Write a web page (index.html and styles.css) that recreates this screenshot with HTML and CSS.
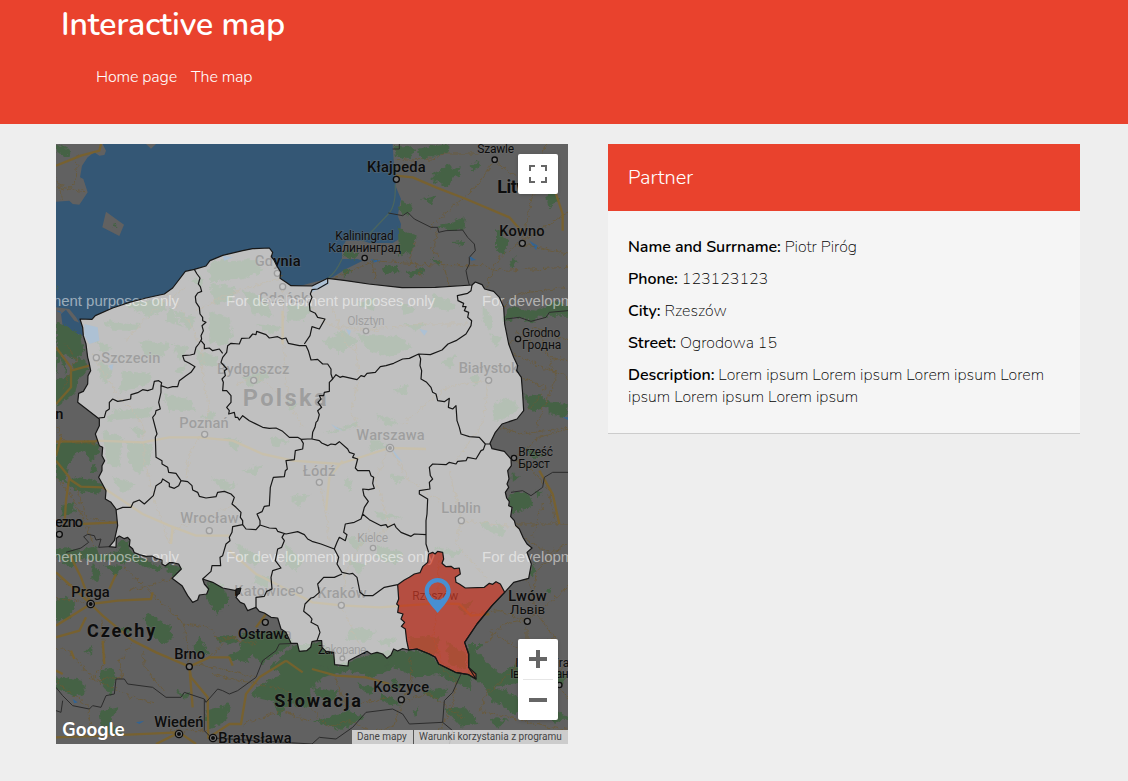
FILE: index.html
```html
<!DOCTYPE html>
<html lang="en">
<head>
<meta charset="utf-8">
<title>Interactive map</title>
<link rel="stylesheet" href="styles.css">
</head>
<body>
<header class="header">
  <h1 class="title">Interactive map</h1>
  <nav class="nav"><a class="link home">Home page</a><a class="link themap">The map</a></nav>
</header>
<main class="main">
  <section class="map">
    <svg class="canvas" viewBox="0 0 1536 1800" xmlns="http://www.w3.org/2000/svg">
      <defs>
        <path id="poland" d="M72 525L108 526 118 515 170 492 220 475 270 462 325 450 350 432 388 382 415 376 450 366 462 350 500 334 560 320 590 314 640 312 650 325 646 338 655 350 664 368 674 384 672 403 690 415 705 425 768 426 815 403 870 410 938 420 1038 431 1138 430 1248 423 1258 414 1278 422 1286 435 1313 442 1330 460 1343 490 1346 540 1358 600 1373 640 1385 665 1382 680 1396 700 1400 750 1403 800 1383 825 1338 840 1318 865 1302 898 1308 914 1345 922 1365 945 1366 965 1355 980 1359 1005 1353 1020 1358 1030 1348 1045 1352 1062 1360 1073 1358 1085 1368 1090 1364 1118 1375 1130 1379 1145 1390 1155 1401 1180 1413 1200 1428 1212 1413 1225 1426 1260 1418 1303 1373 1315 1346 1345 1308 1385 1263 1440 1226 1495 1238 1530 1238 1570 1260 1605 1238 1592 1198 1585 1148 1560 1138 1540 1120 1530 1083 1515 1058 1518 1040 1514 1025 1521 1013 1515 1005 1533 993 1543 980 1530 963 1525 945 1530 933 1522 898 1540 878 1550 876 1566 836 1562 833 1525 810 1522 798 1510 797 1490 783 1490 768 1493 764 1510 752 1520 730 1522 724 1498 705 1498 690 1465 675 1455 665 1422 645 1420 625 1407 610 1402 600 1390 575 1400 565 1380 553 1375 540 1360 552 1340 540 1340 500 1332 470 1315 440 1305 445 1320 458 1335 452 1350 430 1353 425 1368 410 1375 395 1355 378 1325 348 1303 376 1275 368 1260 350 1256 340 1256 328 1266 318 1260 318 1248 300 1243 288 1236 270 1237 250 1232 235 1226 230 1214 220 1206 222 1188 215 1180 205 1184 190 1176 181 1183 180 1210 160 1208 175 1190 185 1145 180 1095 165 1075 148 1065 150 1040 138 1018 128 1000 138 980 138 965 146 950 138 935 140 910 130 905 118 870 130 845 130 825 65 775 68 748 82 742 95 720 96 695 104 680 99 655 95 640 90 600 82 575 80 550Z"/>
        <path id="region" d="M1118 1230L1130 1225 1137 1230 1145 1222 1160 1225 1163 1245 1158 1258 1170 1268 1185 1267 1195 1274 1210 1272 1213 1290 1198 1300 1200 1315 1210 1320 1228 1332 1285 1330 1300 1318 1310 1321 1320 1313 1333 1320 1346 1345 1308 1385 1263 1440 1226 1495 1238 1530 1238 1570 1260 1590 1260 1605 1238 1592 1198 1585 1148 1560 1138 1540 1120 1530 1083 1515 1058 1518 1052 1490 1048 1455 1036 1447 1046 1435 1035 1425 1041 1410 1025 1405 1028 1385 1022 1380 1028 1365 1025 1322 1045 1308 1060 1300 1075 1290 1092 1286 1100 1268 1115 1255Z"/>
        <filter id="rough" x="0" y="0" width="100%" height="100%"><feTurbulence type="fractalNoise" baseFrequency=".07" numOctaves="3" seed="4" result="n"/><feDisplacementMap in="SourceGraphic" in2="n" scale="22" xChannelSelector="R" yChannelSelector="G"/></filter>
        <clipPath id="others"><path clip-rule="evenodd" d="M0 0H1536V1800H0ZM1118 1230L1130 1225 1137 1230 1145 1222 1160 1225 1163 1245 1158 1258 1170 1268 1185 1267 1195 1274 1210 1272 1213 1290 1198 1300 1200 1315 1210 1320 1228 1332 1285 1330 1300 1318 1310 1321 1320 1313 1333 1320 1346 1345 1308 1385 1263 1440 1226 1495 1238 1530 1238 1570 1260 1590 1260 1605 1238 1592 1198 1585 1148 1560 1138 1540 1120 1530 1083 1515 1058 1518 1052 1490 1048 1455 1036 1447 1046 1435 1035 1425 1041 1410 1025 1405 1028 1385 1022 1380 1028 1365 1025 1322 1045 1308 1060 1300 1075 1290 1092 1286 1100 1268 1115 1255Z"/></clipPath>
      </defs>
      <rect width="1536" height="1800" fill="#616161"/>
      <path class="sea" d="M0 173L40 170 50 180 70 182 95 145 82 105 72 100 78 65 95 40 115 25 130 35 145 33 150 20 140 0H1010L1013 50 1020 130 1035 165 1025 215 1035 240 1030 285 1010 297 940 297 920 290 870 290 858 310 858 345 905 345 920 350 870 375 830 400 640 450 72 540 60 520 40 495 0 490ZM15 510L30 497 55 530 80 540V575L35 560 20 545Z"/>
      <path class="land" d="M150 203L204 242 190 276 139 250ZM270 0H300L285 14Z"/>
      <use href="#poland" class="land"/>
      <path class="spit" d="M1018 120Q1020 190 995 212Q930 280 920 292M858 345Q840 385 817 402"/>
      <!-- forests -->
      <g class="forest" filter="url(#rough)">
        <path d="M0 0L45 20 40 38 0 25ZM168 248L178 240 185 253ZM0 420L8 440 0 435ZM0 530L50 555 75 575 85 620 55 645 0 620ZM0 600L30 660 30 690 12 640 0 690ZM65 640L90 650 100 680 70 700 62 740 20 775 0 790V710L40 690ZM0 900L60 890 120 895 132 925 105 955 90 920 60 925 35 970 30 1010 60 1000 110 1005 140 1025 130 1050 60 1040 0 1000ZM110 960L125 980 105 990ZM20 1080L50 1075 60 1100 15 1115ZM0 1215L30 1210 70 1220 120 1205 130 1235 200 1220 225 1240 205 1262 170 1245 110 1250 80 1240 45 1270 0 1240ZM185 1190L215 1190 225 1220 260 1245 320 1270 300 1280 230 1250 190 1230ZM110 1260L135 1280 125 1318 105 1300ZM0 1365L30 1355 55 1380 40 1425 0 1430ZM140 1260L200 1270 180 1295ZM323 1268L355 1258 378 1275 350 1303 340 1285ZM458 1310L500 1325 520 1370 480 1415 470 1385 450 1360ZM260 1420L280 1410 325 1440 345 1445 350 1485 320 1500 290 1475ZM190 1455L225 1445 220 1470ZM85 1520L110 1505 108 1530ZM0 1600L80 1610 90 1640 60 1660 20 1640 0 1635ZM135 1580L165 1570 180 1600 165 1655 130 1615ZM410 1520L430 1480 460 1530 430 1530ZM480 1480L530 1475 550 1490 520 1500 490 1495ZM560 1470L690 1460 710 1500 615 1560 590 1535 570 1555 510 1540 550 1520ZM600 1630L680 1590 730 1600 760 1620 768 1690 700 1680 670 1720 650 1670 590 1655ZM450 1700L520 1680 510 1730 455 1755ZM130 1700L190 1690 160 1730 200 1775 140 1770ZM360 1640L400 1650 385 1670ZM640 1570L720 1500 768 1500 840 1565 960 1525 1060 1520 1120 1530 1150 1560 1240 1595 1250 1640 1210 1620 1140 1590 1080 1600 1020 1570 950 1600 880 1580 800 1600 760 1640Z"/>
        <path d="M1012 10L1060 5 1080 20 1050 45 1020 35ZM1080 15L1180 0 1180 25 1100 45ZM1130 90L1180 60 1200 90 1175 130 1130 110ZM1185 80L1215 70 1205 100ZM1240 65L1270 50 1265 80ZM1033 165L1070 190 1055 220 1030 200ZM1100 165L1140 155 1130 180ZM1025 250L1080 275 1065 325 1030 335ZM1140 245L1230 220 1225 255 1190 260ZM1190 295L1225 290 1215 305ZM980 370L1020 365 1030 385 985 390ZM1050 385L1100 370 1105 385 1065 400ZM1125 345L1155 345 1150 370ZM1320 255L1360 290 1345 335 1320 310ZM1360 355L1375 340 1385 355 1365 375ZM1355 490L1440 500 1500 470 1536 490 1536 515 1450 515 1430 535 1385 520 1340 535ZM1490 130L1510 170 1480 190 1470 160ZM870 320L910 330 895 345 865 335ZM860 375L890 380 860 400ZM1400 755L1450 750 1490 790 1425 800ZM1475 775L1536 780 1530 820 1475 810ZM1358 1045L1420 1050 1430 1085 1370 1110ZM1370 985L1395 1000 1370 1010ZM1405 910L1460 930 1435 945ZM1440 1040L1460 1045 1445 1065ZM1320 1130L1345 1150 1335 1180ZM1070 1700L1090 1690 1080 1720ZM1230 1500L1280 1500 1260 1520 1330 1590 1385 1555 1390 1620 1300 1630 1240 1600ZM1280 1620L1350 1640 1410 1680 1380 1710 1310 1670ZM1160 1690L1230 1690 1270 1740 1210 1745ZM1100 1645L1180 1630 1150 1670ZM1010 1605L1040 1625 1010 1640ZM768 1630L850 1640 820 1680 790 1665ZM770 1730L880 1700 930 1720 850 1760ZM790 1490L833 1525 836 1562 880 1565 890 1550 1010 1530 980 1590 860 1580 768 1560V1500ZM1470 1340L1490 1330 1480 1355ZM1420 1290L1440 1250 1430 1300ZM1450 1680L1536 1720 1500 1740ZM980 1650L1020 1670 1030 1690 975 1670ZM900 1620L960 1630 940 1655ZM1400 1500L1440 1540 1420 1570ZM1480 1560L1536 1600 1500 1640ZM1300 1720L1360 1730 1320 1750Z"/>
        <path d="M470 350L600 345 620 380 560 405 470 415 455 380ZM460 420L540 430 530 470 480 480ZM560 440L630 460 650 520 590 510ZM460 500L520 520 530 570 510 610 460 590ZM200 480L320 465 330 500 280 520ZM340 490L380 550 330 530ZM140 530L250 540 240 560 170 560ZM250 590L340 600 320 640 270 640ZM350 600L400 610 370 650ZM130 650L170 680 150 720 130 700ZM200 680L290 690 280 720 190 745ZM320 750L400 765 420 800 340 800ZM170 800L290 790 280 820 150 830ZM140 860L200 880 190 970 150 960ZM210 890L290 900 280 960 250 990 220 960ZM170 1000L240 1020 200 1050ZM420 620L490 640 480 670 430 660ZM700 480L768 490 740 530 690 530ZM560 700L630 680 640 700 580 730ZM500 880L560 890 540 920ZM460 1000L540 1020 510 1040ZM540 1200L620 1240 600 1270 550 1240ZM600 1290L640 1300 630 1330 590 1320ZM690 1200L740 1250 720 1280 690 1260ZM800 590L860 560 910 590 850 630ZM900 570L1030 580 1070 610 1000 640 940 620ZM900 480L960 460 950 500ZM1030 470L1080 500 1040 510ZM1130 450L1200 480 1180 500 1130 490ZM1280 480L1310 530 1300 560 1280 530ZM1300 570L1340 580 1320 610ZM1150 660L1200 630 1190 670ZM1310 780L1360 760 1390 790 1360 820 1310 830ZM960 810L1030 835 990 850ZM950 880L1000 910 940 920ZM800 870L910 830 900 850ZM860 1000L890 1010 880 1050ZM950 1100L1040 1120 980 1130ZM870 1180L930 1190 900 1220ZM960 1200L1040 1230 1020 1260 960 1240ZM870 1250L930 1260 910 1290ZM1270 1130L1350 1160 1340 1180 1290 1160ZM1130 1210L1220 1220 1190 1240ZM1200 1390L1250 1370 1230 1410ZM1060 1480L1150 1480 1140 1540 1060 1510ZM1170 1490L1230 1530 1230 1580 1180 1560ZM880 1450L960 1460 940 1490 870 1490ZM960 1490L1020 1480 1000 1510ZM400 410L440 400 440 430ZM120 590L170 610 140 630ZM350 680L390 660 380 690ZM220 850L270 860 250 880ZM350 500L420 520 400 560ZM600 540L680 550 640 570ZM1040 540L1110 540 1080 560ZM690 770L730 780 700 800ZM430 820L480 800 470 830ZM640 880L700 890 660 910ZM560 980L620 960 600 1000ZM700 1060L760 1050 730 1090ZM1010 740L1060 720 1050 750ZM1240 700L1270 690 1260 730ZM1000 990L1050 1000 1020 1020Z"/>
      </g>
      <g class="lake"><path d="M85 540L125 550 130 590 100 600 85 575ZM500 335L530 340 505 350ZM1090 555L1115 560 1105 575ZM870 555L885 560 880 575ZM1420 290L1445 305 1440 318ZM1240 335L1260 348 1245 350ZM815 405L820 420 768 445V428ZM825 840L860 860 840 855ZM1005 910L1040 955 1020 940ZM1520 820H1536V828ZM50 1665L65 1675 55 1678ZM240 1735L265 1730 250 1740ZM0 500L20 510 10 500ZM158 665L172 660 168 680ZM945 345L975 350 950 356Z"/></g>
      <!-- roads -->
      <g class="minor" filter="url(#rough)">
        <path d="M60 30L65 100 35 140M0 125Q80 145 90 143M20 165L0 100M0 1000Q80 1090 110 1200M30 600L60 650 20 740M0 840L20 890 120 900M60 1030L90 1120 180 1140M0 1360L60 1370 104 1380M138 1430L145 1560 110 1605 50 1530 0 1510M200 1265L290 1350 385 1440 460 1450 490 1490 560 1475M260 1520L265 1570 330 1650M385 1440L400 1570M110 1605L220 1655 300 1680M0 1300L60 1330M350 1303L220 1340M225 1500L190 1555 200 1600 110 1605M465 1590L600 1620 700 1640M560 1740L680 1700 768 1735M460 1760L340 1760M100 1775V1690L0 1610M410 1560L520 1580 600 1600M600 1500L520 1480 460 1540"/>
        <path d="M1010 50L1130 45 1160 30 1270 30M1316 47L1270 120 1160 215 1120 250M1316 47L1360 85 1400 100M1470 0L1450 60 1420 200 1400 290 1330 340 1310 380 1290 430M1400 300L1536 330M1400 290L1536 205M948 350L1160 365 1280 365 1320 380 1536 370M950 350L960 410M1150 250L1130 310 1165 370 1180 425M815 410L945 355M1330 500L1380 450 1536 430M1360 600L1440 550 1536 590M1370 630L1440 660 1536 700M1400 700L1470 730 1420 800M1330 850L1400 870 1536 850M1370 945L1450 880 1536 855M1370 945L1430 980 1480 1040 1500 1140M1380 1140H1536M1430 1180L1460 1080M1410 1300L1450 1420 1510 1500M1413 1430L1330 1400 1230 1410M1413 1430L1340 1440 1290 1500M1413 1430V1500L1370 1580 1290 1650 1270 1700 1536 1760M1413 1430L1536 1330M1060 1540L1070 1600 1045 1660 1010 1750 960 1760M1038 1670L1120 1650 1220 1720M1150 1560L1200 1610 1190 1680 1140 1780M840 1600L870 1690 1000 1660M768 1700L820 1750 880 1730 960 1770M1500 1230L1440 1280 1430 1380M1536 1560L1480 1600 1536 1660M1290 440L1310 470M1380 560L1480 640 1536 650M1450 560L1500 700 1440 850M1400 1180L1480 1230 1536 1200M1300 1460L1380 1510 1500 1480M1100 400L1060 340 1080 290"/>
        <path d="M330 450L400 530 430 600M420 500L520 450 680 400M210 590L280 510 390 430M680 430V600L700 780 740 850M110 630Q150 700 190 760L230 800 260 840 265 950 300 1080 340 1200 350 1160 540 1080M440 600V700L460 790 445 860 400 930 390 1000M540 720L610 700 690 770M900 600L910 700 885 800 910 860M1000 910L1060 1010 1150 1070M1002 910L960 1000 1000 1150 950 1180M1298 708L1280 840 1200 950M1298 708L1170 730 1040 840M1216 1130L1200 1200 1290 1300M1216 1130L1180 980M1216 1130L1390 1150M930 560L1100 540 1230 540M930 560L810 540 768 490M820 470L870 600 900 620M790 1010L810 1100 820 1200M856 1384L870 1280 940 1150M856 1384L900 1480 930 1540M1144 1380L1130 1480 1160 1560M1144 1380L1150 1240"/>
      </g>
      <g class="major"><path d="M135 0L130 20 75 35 0 65M1020 95L1070 100 1140 130 1230 165 1360 220 1395 260M1500 150L1520 210V260M0 610L45 670 45 730 0 780M45 680L100 665M0 935L15 880M0 893L120 892M0 950L40 1000 30 1070 25 1150M40 1005L75 1028 140 1030M75 1140L185 1135M0 1285L50 1330 104 1380M40 1230L75 1300 104 1380M104 1380L0 1445M104 1380L185 1370 285 1365 290 1345M104 1380L140 1415 230 1490 300 1525 400 1568 460 1540 520 1540 530 1565M400 1568L405 1600 455 1660 457 1782 520 1740 555 1740 570 1650 610 1600 690 1550M400 1568L410 1690M160 1335L180 1290M0 1480L70 1460 90 1420M45 1520L55 1545M140 1490L145 1560M0 1780L150 1775 370 1765 300 1800M370 1765L420 1800M630 1410L600 1450M690 1550L740 1585M768 1575L840 1595 930 1600 1000 1620M0 1580L20 1590M1450 980L1490 1050 1510 1140"/><path d="M120 890L260 895 340 880 430 880 530 890 620 930 710 950 850 960 1000 912 1110 915M140 1030L260 1110 340 1145 420 1175 520 1175M680 500V600M350 1145L345 1200M520 1220L600 1290 770 1375 856 1384 970 1390 1144 1378 1210 1380 1245 1415 1300 1410M810 1100L820 1000 860 950"/></g>
      <path class="abroad" d="M1030 0V15L1010 15M997 207L1040 215 1055 205 1075 225 1125 250 1145 250 1148 265 1170 260 1220 258 1235 280 1255 300 1258 320 1240 340 1240 360 1230 380 1235 405 1240 423M1350 525L1390 520 1425 532 1470 520 1480 505 1536 500M1365 1045L1400 1040 1425 1055 1460 1030 1465 1000 1490 985 1536 985M30 1225L75 1212 98 1195 83 1178 95 1171 115 1175 120 1188 135 1185 128 1210 160 1208M0 1630L20 1655 50 1685 100 1695 110 1685 135 1690 150 1655 175 1650 180 1605 205 1605 215 1620 290 1630 330 1660 375 1660 385 1645 445 1665 450 1675 485 1635 500 1640 520 1650 545 1640 600 1600 620 1550 660 1520 670 1500 720 1498M445 1665L445 1760 470 1785M0 1700L15 1705 20 1670M470 1782L768 1800 790 1780 840 1785 890 1750 930 1705 1010 1695 1040 1710 1060 1740 1160 1735 1165 1670 1190 1645 1215 1590M1160 1735L1190 1760 1180 1800"/>
      <g class="label big"><text x="93" y="1480" textLength="205">Czechy</text><text x="655" y="1688" textLength="260">Słowacja</text><text x="1324" y="147" textLength="124">Litwa</text></g>
      <text class="label country" x="560" y="785" textLength="252">Polska</text>
      <g class="label city">
        <text x="933" y="84" textLength="176">Kłajpeda</text><text x="1330" y="276" textLength="136">Kowno</text><text x="596" y="366" textLength="138">Gdynia</text><text x="608" y="476" textLength="150">Gdańsk</text><text x="136" y="656" textLength="177">Szczecin</text><text x="483" y="690" textLength="217">Bydgoszcz</text><text x="370" y="851" textLength="148">Poznań</text><text x="1208" y="687" textLength="180">Białystok</text><text x="901" y="888" textLength="205">Warszawa</text><text x="740" y="996" textLength="98">Łódź</text><text x="373" y="1136" textLength="175">Wrocław</text><text x="1156" y="1106" textLength="119">Lublin</text><text x="46" y="1358" textLength="115">Praga</text><text x="535" y="1356" textLength="184">Katowice</text><text x="784" y="1362" textLength="148">Kraków</text><text x="546" y="1486" textLength="161">Ostrawa</text><text x="355" y="1545" textLength="92">Brno</text><text x="295" y="1749" textLength="147">Wiedeń</text><text x="487" y="1798" textLength="220">Bratysława</text><text x="952" y="1644" textLength="167">Koszyce</text><text x="1357" y="1371" textLength="115">Lwów</text><text x="-30" y="1150" textLength="111">Liezno</text><text x="-84" y="826" textLength="106">Berlin</text>
      </g>
      <g class="label town">
        <text x="1264" y="28" textLength="110">Szawle</text><text x="838" y="287" textLength="175">Kaliningrad</text><text x="817" y="324" textLength="218">Калининград</text><text x="874" y="542" textLength="112">Olsztyn</text><text x="1398" y="579" textLength="115">Grodno</text><text x="1398" y="615" textLength="118">Гродна</text><text x="1387" y="936" textLength="104">Brześć</text><text x="1387" y="972" textLength="94">Брэст</text><text x="904" y="1193" textLength="92">Kielce</text><text x="1069" y="1367" textLength="138">Rzeszów</text><text x="786" y="1529" textLength="145">Zakopane</text><text x="1362" y="1410" textLength="105" lengthAdjust="spacingAndGlyphs">Львів</text><text x="1378" y="1570" textLength="162">Iwano-Fra</text><text x="1363" y="1603" textLength="175">Івано-Фран</text>
      </g>
      <g class="dot"><circle cx="1021" cy="106" r="9"/><circle cx="1316" cy="47" r="8"/><circle cx="1399" cy="298" r="9"/><circle cx="926" cy="342" r="8"/><circle cx="664" cy="388" r="9"/><circle cx="680" cy="428" r="9"/><circle cx="121" cy="641" r="9"/><circle cx="593" cy="709" r="9"/><circle cx="446" cy="871" r="9"/><circle cx="1298" cy="709" r="9"/><circle cx="930" cy="561" r="8"/><circle cx="1386" cy="585" r="8"/><circle cx="1374" cy="942" r="8"/><circle cx="790" cy="1015" r="9"/><circle cx="460" cy="1160" r="9"/><circle cx="1216" cy="1130" r="9"/><circle cx="951" cy="1212" r="8"/><circle cx="731" cy="1339" r="9"/><circle cx="856" cy="1384" r="9"/><circle cx="628" cy="1435" r="9"/><circle cx="400" cy="1568" r="9"/><circle cx="1036" cy="1667" r="9"/><circle cx="1414" cy="1432" r="9"/><circle cx="10" cy="1171" r="9"/><circle cx="859" cy="1543" r="7"/><circle cx="1510" cy="1623" r="8"/></g>
      <g class="capital"><circle cx="1002" cy="912" r="11"/><circle cx="104" cy="1380" r="11"/><circle cx="369" cy="1770" r="11"/><circle cx="471" cy="1782" r="11"/></g>
      <g class="capcore"><circle cx="1002" cy="912" r="6"/><circle cx="104" cy="1380" r="6"/><circle cx="369" cy="1770" r="6"/><circle cx="471" cy="1782" r="6"/></g>
      <g class="watermark"><text x="-258" y="487" textLength="627">For development purposes only</text><text x="510" y="487" textLength="627">For development purposes only</text><text x="1278" y="487" textLength="627">For development purposes only</text><text x="-258" y="1255" textLength="627">For development purposes only</text><text x="510" y="1255" textLength="627">For development purposes only</text><text x="1278" y="1255" textLength="627">For development purposes only</text></g>
      <!-- voivodeships -->
      <use href="#poland" class="veil" clip-path="url(#others)"/>
      <use href="#region" class="selected"/>
      <use href="#poland" class="border"/>
      <use href="#region" class="border"/>
      <path class="border" d="M415 376L423 390 432 402 427 420 433 428 437 442 425 447 418 458 420 475 430 490 432 510 440 520 440 530 450 535 438 545 442 560 435 575 437 585 428 600 420 610 415 630 403 633 380 635 385 650 400 658 417 668 405 685 390 695 370 710 365 728 350 728 335 732 315 725 317 716 308 710 295 712 290 735 275 740 260 737 245 746 225 752 224 765 200 770 185 772 170 765 160 775 160 795 150 802 145 820 128 822M315 725L315 745 308 775 313 795 300 800 298 810 290 820 303 870 298 880 300 940 318 950 318 960 335 970 338 985 360 988 375 1010 368 1025 355 1033 340 1028 340 1018 320 1005 316 1015 300 1025 292 1055 265 1080 250 1068 232 1075 225 1090 200 1090 180 1098M375 1010L395 1013 408 1025 410 1038 425 1045 430 1057 450 1062 480 1058 485 1045 505 1042 525 1050 535 1060 528 1080 540 1090 555 1105 553 1120 560 1130 560 1142 570 1155 600 1157 612 1143 612 1130 603 1110 618 1103 625 1087 640 1085 643 1030 652 1000 685 998 688 980 694 975 690 950 715 947 718 920 740 915 742 898 735 886 725 880 700 880 680 862 660 852 640 853 620 850 580 830 560 815 550 828 545 820 538 820 535 805 518 810 520 800 512 790 525 775 525 755 512 740 500 740 502 715 498 705 508 695 505 680 513 675 495 655 500 640 512 625 515 605 525 598 550 600 557 583 580 582 590 570 600 572 602 562 630 572 640 582 665 578 678 585 690 582 697 598 730 605 750 605 757 620 765 648 785 646 800 660 815 660 825 675 825 690 830 705 820 715 820 742 805 745 803 755 790 755 795 765 786 775 797 790 785 800 790 812 785 830 780 835 777 850 770 865 768 885 755 885 735 886M445 600L445 614 460 612 470 620 490 615 500 628M435 590L445 602M830 705L840 692 852 700 860 697 903 707 915 695 925 698 933 688 958 685 973 668 990 665 1013 658 1040 645 1060 643 1088 630 1123 632 1158 618 1176 600 1200 590 1230 570 1245 545 1247 530 1235 520 1238 505 1225 500 1230 488 1220 488 1223 478 1206 470 1204 455 1235 448 1245 440 1248 423M1088 630L1094 645 1092 665 1097 680 1095 705 1112 715 1125 730 1130 745 1140 750 1145 770 1165 773 1180 763 1177 790 1190 795 1200 785 1203 830 1210 850 1215 870 1240 878 1270 880 1288 900 1302 900M768 885L790 890 797 897 815 905 825 900 838 902 850 893 875 915 880 925 895 930 890 940 905 945 898 972 905 980 940 980 945 995 953 1000 950 1018 955 1033 938 1037 920 1035 924 1055 937 1072 925 1090 920 1110 940 1127 975 1145 990 1142 995 1150 1015 1140 1020 1150 1035 1165 1065 1177 1075 1170 1110 1172M1288 900L1282 917 1275 920 1260 945 1235 940 1230 950 1205 952 1200 960 1180 955 1170 962 1130 960 1120 970 1123 995 1130 1005 1120 1015 1122 1035 1090 1040 1090 1050 1115 1065 1113 1110 1110 1130V1200L1118 1225M920 1110L915 1125 895 1135 868 1140 863 1165 873 1172 868 1190 850 1180 843 1195 835 1215 848 1240 843 1260 858 1285 880 1290 890 1288 903 1300 912 1345 925 1355 950 1355 985 1330 1025 1322M612 1143L640 1152 660 1153 665 1162 690 1170 725 1163 745 1172 755 1185 768 1192 795 1200 835 1215M570 1155L560 1142 530 1148 528 1165 520 1180 522 1190 510 1200 500 1235 492 1240 494 1265 468 1265 465 1282 440 1305M685 1168L678 1180 685 1190 677 1210 665 1215 658 1250 675 1272 650 1280 645 1300 648 1335 632 1342 625 1357 600 1360 600 1390M858 1290L835 1300 803 1300 785 1320 790 1345 773 1360 765 1362 747 1380 743 1402 760 1415 768 1425 765 1435 785 1445 792 1465 783 1490M815 403L815 418 785 435 768 437 763 450 768 460 760 480 762 500 778 508 785 520 807 525 790 555 768 548 762 575 745 600"/>
      <path class="rock" d="M540 1335L555 1332 550 1350 540 1352Z"/>
      <!-- marker -->
      <path class="pin" fill-rule="evenodd" d="M1145 1302C1123 1302 1106 1319 1106 1341C1106 1363 1123 1381 1145 1407C1167 1381 1184 1363 1184 1341C1184 1319 1167 1302 1145 1302ZM1145 1315A26 26 0 1 1 1145 1367A26 26 0 1 1 1145 1315Z"/>
      <text class="google" x="18" y="1776" textLength="188" lengthAdjust="spacingAndGlyphs">Google</text>
    </svg>
    <button class="control full" aria-label="Fullscreen"><svg viewBox="0 0 18 18"><path d="M0 0H6V2H2V6H0ZM12 0H18V6H16V2H12ZM0 12H2V16H6V18H0ZM16 12H18V18H12V16H16Z"/></svg></button>
    <div class="control zoom"><svg viewBox="0 0 40 81"><path d="M18 11H22V18H29V22H22V29H18V22H11V18H18ZM11 59H29V63H11Z"/><path class="rule" d="M5 40H35V41H5Z"/></svg></div>
    <div class="terms"><span class="data">Dane mapy</span><span class="use">Warunki korzystania z programu</span></div>
  </section>
  <aside class="card">
    <h2 class="cardhead">Partner</h2>
    <div class="details">
      <p class="row r1"><b>Name and Surrname:</b> <span>Piotr Piróg</span></p>
      <p class="row r2"><b>Phone:</b> <span>123123123</span></p>
      <p class="row r3"><b>City:</b> <span>Rzeszów</span></p>
      <p class="row r4"><b>Street:</b> <span>Ogrodowa 15</span></p>
      <p class="row r5"><b>Description:</b> <span>Lorem ipsum Lorem ipsum Lorem ipsum Lorem<br>ipsum Lorem ipsum Lorem ipsum</span></p>
    </div>
  </aside>
</main>
</body>
</html>
```
FILE: styles.css
```css
* { box-sizing: border-box; }
body { margin: 0; background: #eee; font-family: Nunito, Lato, sans-serif; font-size: 16px; line-height: 22px; color: #000; font-weight: 200; min-height: 781px; }
.header { height: 124px; background: #e9422d; color: #fff; padding: 2px 61px 0; }
.title { margin: 0; font-size: 32px; line-height: 46px; font-weight: 600; letter-spacing: -.08px; }
.nav { display: flex; gap: 14px; padding: 18px 0 0 35px; font-weight: 300; letter-spacing: -.12px; }
.main { display: flex; gap: 40px; padding: 20px 48px 0 56px; align-items: flex-start; }
.map { position: relative; width: 512px; height: 600px; overflow: hidden; flex: none; }
.canvas { display: block; width: 512px; height: 600px; }
.sea { fill: #345775; }
.land { fill: #616161; }
.spit { fill: none; stroke: #4b655f; stroke-width: 4; }
.forest { fill: #456245; }
.lake { fill: #326494; }
.minor, .major { fill: none; stroke: #6c5a34; stroke-width: 3; stroke-linejoin: round; opacity: .75; }
.major { stroke: #7a622b; stroke-width: 7; opacity: .9; }
.abroad { fill: none; stroke: #2c2c2c; stroke-width: 3; }
.label { font-family: Roboto, sans-serif; fill: #0d0d0d; stroke: #707070; stroke-opacity: .45; stroke-width: 4; paint-order: stroke; }
.city { font-size: 44px; font-weight: 500; }
.town { font-size: 36px; font-weight: 400; }
.big { font-size: 54px; font-weight: 700; }
.country { font-size: 71px; font-weight: 700; }
.dot { fill: #777; stroke: #0d0d0d; stroke-width: 4; }
.capital { fill: #777; stroke: #0d0d0d; stroke-width: 4; }
.capcore { fill: #0d0d0d; }
.watermark { font-family: "Liberation Sans", Arial, sans-serif; font-size: 45px; fill: #fff; fill-opacity: .52; }
.veil { fill: #fff; fill-opacity: .6; }
.selected { fill: #e9422d; fill-opacity: .62; }
.border { fill: none; stroke: #171717; stroke-width: 3.6; stroke-linejoin: round; }
.rock { fill: #222; stroke: #111; stroke-width: 3; }
.pin { fill: #478fd2; }
.google { font-family: Nunito, Lato, sans-serif; font-size: 60px; font-weight: 700; fill: #fff; stroke: #555; stroke-width: 3; paint-order: stroke; }
.control { position: absolute; right: 10px; width: 40px; background: #fff; border: 0; border-radius: 2px; box-shadow: 0 1px 4px -1px rgba(0,0,0,.3); fill: #666; padding: 0; }
.full { top: 10px; height: 40px; display: flex; align-items: center; justify-content: center; }
.full svg { width: 18px; height: 18px; }
.zoom { top: 495px; height: 81px; }
.zoom svg { display: block; width: 40px; height: 81px; }
.rule { fill: #e6e6e6; }
.terms { position: absolute; right: 0; bottom: 0; height: 14px; display: flex; font: 10px/14px Roboto, sans-serif; color: #444; background: rgba(245,245,245,.72); white-space: nowrap; }
.data { width: 61px; padding-left: 5px; }
.use { width: 155px; padding-left: 5px; border-left: 1px solid #555; }
.card { width: 472px; background: #f5f5f5; border-bottom: 1px solid #ccc; }
.cardhead { margin: 0; height: 67px; padding: 0 20px; background: #e9422d; color: #fff; font-size: 20px; line-height: 67px; font-weight: 300; }
.details { padding: 25px 20px; }
.row { margin: 0 0 10px; white-space: nowrap; }
.row:last-child { margin-bottom: 0; }
.row b { font-weight: 600; letter-spacing: -.05px; }
```
